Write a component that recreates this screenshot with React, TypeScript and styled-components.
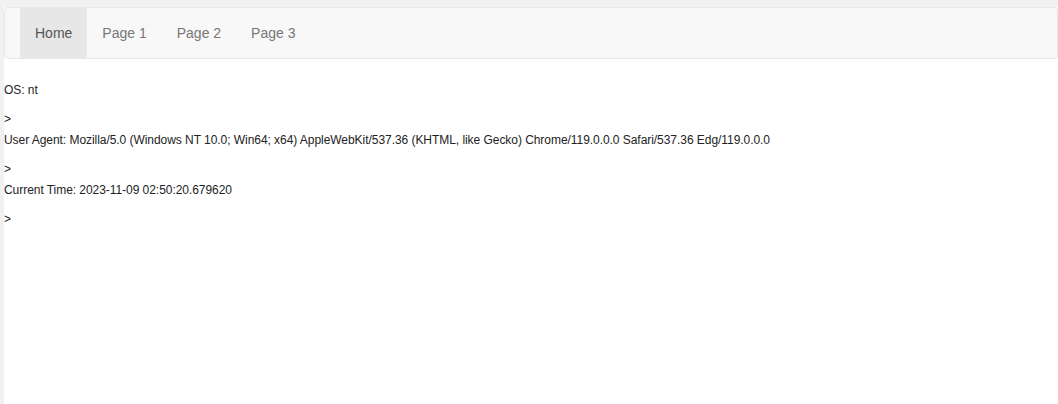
import React from "react";
import styled, { createGlobalStyle } from "styled-components";

const GlobalStyle = createGlobalStyle`
  html, body {
    margin: 0;
    padding: 0;
    height: 100%;
    background: #f1f1f1;
  }
  #root {
    height: 100%;
  }
  * { box-sizing: border-box; }
`;

const Page = styled.div`
  height: 100%;
  padding: 7px 0 0 4px;
  display: flex;
  flex-direction: column;
`;

const Main = styled.main`
  flex: 1;
  background: #ffffff;
  font-family: "Liberation Sans", Arial, sans-serif;
`;

const Navbar = styled.nav`
  display: flex;
  height: 52px;
  background: #f8f8f8;
  border: 1px solid #e7e7e7;
  border-radius: 4px;
  margin-bottom: 21px;
  padding: 0 15px;
`;

const NavList = styled.ul`
  display: flex;
  list-style: none;
  margin: 0;
  padding: 0;
`;

const NavLink = styled.a<{ $active?: boolean }>`
  display: block;
  height: 50px;
  padding: 15px;
  line-height: 20px;
  font-size: 14px;
  text-decoration: none;
  color: ${(p) => (p.$active ? "#555555" : "#777777")};
  background: ${(p) => (p.$active ? "#e7e7e7" : "transparent")};
`;

const Output = styled.div`
  font-size: 12px;
  line-height: 21px;
  letter-spacing: -0.05px;
  color: #222222;
`;

const Line = styled.p`
  margin: 0 0 8px;
`;

const Prompt = styled.div`
  margin: 0;
`;

const items = ["Home", "Page 1", "Page 2", "Page 3"];

const lines = [
  "OS: nt",
  "User Agent: Mozilla/5.0 (Windows NT 10.0; Win64; x64) AppleWebKit/537.36 (KHTML, like Gecko) Chrome/119.0.0.0 Safari/537.36 Edg/119.0.0.0",
  "Current Time: 2023-11-09 02:50:20.679620",
];

export default function App() {
  return (
    <>
      <GlobalStyle />
      <Page>
        <Main>
          <Navbar>
            <NavList>
              {items.map((it, i) => (
                <li key={it}>
                  <NavLink href="#" $active={i === 0}>
                    {it}
                  </NavLink>
                </li>
              ))}
            </NavList>
          </Navbar>
          <Output>
            {lines.map((l) => (
              <React.Fragment key={l}>
                <Line>{l}</Line>
                <Prompt>&gt;</Prompt>
              </React.Fragment>
            ))}
          </Output>
        </Main>
      </Page>
    </>
  );
}
